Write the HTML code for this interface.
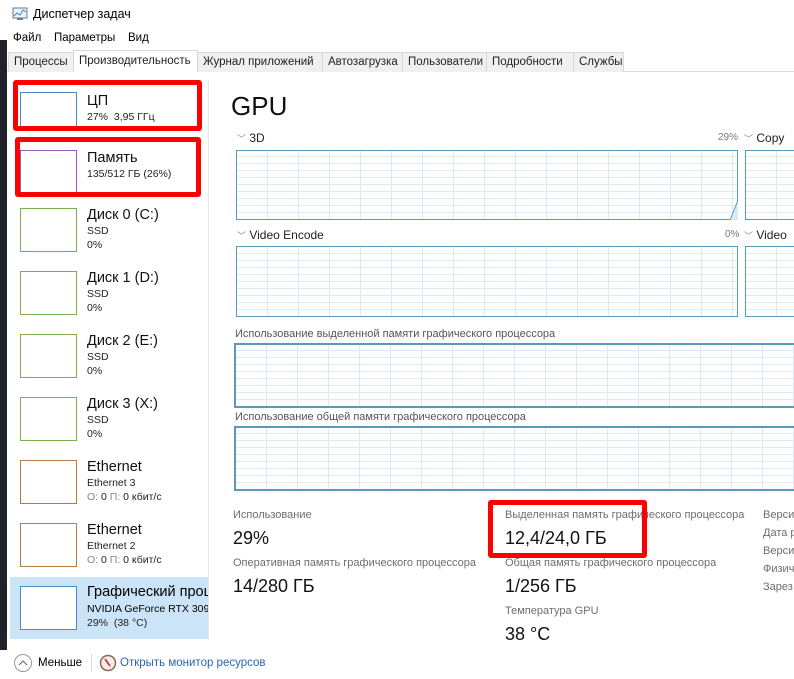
<!DOCTYPE html>
<html><head><meta charset="utf-8"><style>
*{margin:0;padding:0;box-sizing:border-box}
body{width:794px;height:679px;overflow:hidden;background:#fff;font-family:"Liberation Sans","Noto Sans CJK SC",sans-serif;color:#000;position:relative}
.a{position:absolute;white-space:nowrap}
.strip{position:absolute;left:0;top:40px;width:7px;height:610px;background:#1f2329}
.tab{position:absolute;top:52px;height:20px;background:#f0f0f0;border:1px solid #d9d9d9;border-bottom:none;font-size:11.5px;line-height:18px;padding-left:5px;color:#222;white-space:nowrap;overflow:hidden}
.thumb{position:absolute;left:20px;width:57px;height:44px;border:1px solid #4f88c0;background:#fff}
.t1{position:absolute;left:87px;font-size:14.5px;color:#111;white-space:nowrap}
.t2{position:absolute;left:87px;font-size:10.5px;color:#222;white-space:nowrap}
.red{position:absolute;border:5px solid #f00;border-radius:3px}
.g{position:absolute;border:1px solid #5a9ab8;background-color:#fff;
background-image:repeating-linear-gradient(90deg,transparent 0 30px,#dceaf4 30px 31px),repeating-linear-gradient(0deg,transparent 0 6px,#dceaf4 6px 7px)}
.lbl{position:absolute;font-size:12px;color:#222;white-space:nowrap}
.sl{position:absolute;font-size:11px;color:#6d6d6d;white-space:nowrap}
.sv{position:absolute;font-size:18px;color:#111;white-space:nowrap}
</style></head><body>
<div class="strip"></div>
<svg class="a" style="left:12px;top:7px" width="16" height="14"><rect x="1" y="1" width="14" height="10" fill="#eaf2fa" stroke="#6a7d90"/><polyline points="2,9 5,6 8,8 11,3 14,5" fill="none" stroke="#3a8ad0"/><rect x="5" y="11" width="6" height="2" fill="#6a7d90"/></svg>
<div class="a" style="left:33px;top:7px;font-size:12.5px">Диспетчер задач</div>
<div class="a" style="left:13px;top:32px;font-size:11.5px">Файл</div>
<div class="a" style="left:54px;top:32px;font-size:11.5px">Параметры</div>
<div class="a" style="left:128px;top:32px;font-size:11.5px">Вид</div>
<div class="a" style="left:7px;top:71px;width:787px;height:1px;background:#d9d9d9"></div>
<div class="tab" style="left:8px;width:66px">Процессы</div>
<div class="tab" style="left:73px;top:50px;height:22px;width:125px;background:#fff;line-height:20px">Производительность</div>
<div class="tab" style="left:197px;width:126px">Журнал приложений</div>
<div class="tab" style="left:322px;width:81px">Автозагрузка</div>
<div class="tab" style="left:402px;width:85px">Пользователи</div>
<div class="tab" style="left:486px;width:88px">Подробности</div>
<div class="tab" style="left:573px;width:51px">Службы</div>
<div class="a" style="left:208px;top:80px;width:1px;height:560px;background:#e6e6e6"></div>

<div class="thumb" style="top:92px;height:35px"></div><div class="t1" style="top:93px">ЦП</div><div class="t2" style="top:111px">27%&nbsp; 3,95 ГГц</div>
<div class="thumb" style="top:150px;border-color:#9a58b8"></div><div class="t1" style="top:150px">Память</div><div class="t2" style="top:168px">135/512 ГБ (26%)</div>
<div class="thumb" style="top:208px;border-color:#7ab050"></div><div class="t1" style="top:207px">Диск 0 (C:)</div><div class="t2" style="top:225px">SSD</div><div class="t2" style="top:239px">0%</div>
<div class="thumb" style="top:271px;border-color:#7ab050"></div><div class="t1" style="top:270px">Диск 1 (D:)</div><div class="t2" style="top:288px">SSD</div><div class="t2" style="top:302px">0%</div>
<div class="thumb" style="top:334px;border-color:#7ab050"></div><div class="t1" style="top:333px">Диск 2 (E:)</div><div class="t2" style="top:351px">SSD</div><div class="t2" style="top:365px">0%</div>
<div class="thumb" style="top:397px;border-color:#7ab050"></div><div class="t1" style="top:396px">Диск 3 (X:)</div><div class="t2" style="top:414px">SSD</div><div class="t2" style="top:428px">0%</div>
<div class="thumb" style="top:460px;border-color:#b87a40"></div><div class="t1" style="top:459px">Ethernet</div><div class="t2" style="top:477px">Ethernet 3</div><div class="t2" style="top:491px"><span style="color:#888">О:</span> 0 <span style="color:#888">П:</span> 0 кбит/с</div>
<div class="thumb" style="top:523px;border-color:#b87a40"></div><div class="t1" style="top:522px">Ethernet</div><div class="t2" style="top:540px">Ethernet 2</div><div class="t2" style="top:554px"><span style="color:#888">О:</span> 0 <span style="color:#888">П:</span> 0 кбит/с</div>
<div class="a" style="left:10px;top:577px;width:198px;height:62px;background:#cce4f7"></div>
<div class="thumb" style="top:586px"></div>
<div class="a" style="left:87px;top:584px;width:121px;overflow:hidden;font-size:14.5px">Графический процессор</div>
<div class="a" style="left:87px;top:603px;width:121px;overflow:hidden;font-size:10.5px">NVIDIA GeForce RTX 3090</div>
<div class="t2" style="top:617px">29%&nbsp; (38 °C)</div>

<div class="red" style="left:13px;top:80px;width:189px;height:51px"></div>
<div class="red" style="left:15px;top:137px;width:186px;height:60px"></div>

<div class="a" style="left:231px;top:91px;font-size:26px;color:#111">GPU</div>
<div class="lbl" style="left:237px;top:131px"><span style="color:#888;font-size:9px">﹀</span> 3D</div>
<div class="a" style="left:718px;top:132px;font-size:10px;color:#777">29%</div>
<div class="lbl" style="left:744px;top:131px"><span style="color:#888;font-size:9px">﹀</span> Copy</div>
<div class="g" style="left:236px;top:150px;width:502px;height:70px"></div>
<svg class="a" style="left:728px;top:198px" width="10" height="22"><polygon points="2,22 10,2 10,22" fill="#d8eaf6"/><line x1="2" y1="22" x2="10" y2="2" stroke="#5a9ac8"/></svg>
<div class="g" style="left:745px;top:150px;width:60px;height:70px"></div>
<div class="lbl" style="left:237px;top:228px"><span style="color:#888;font-size:9px">﹀</span> Video Encode</div>
<div class="a" style="left:725px;top:229px;font-size:10px;color:#777">0%</div>
<div class="lbl" style="left:744px;top:228px"><span style="color:#888;font-size:9px">﹀</span> Video</div>
<div class="g" style="left:236px;top:246px;width:502px;height:71px"></div>
<div class="g" style="left:745px;top:246px;width:60px;height:71px"></div>
<div class="sl" style="left:235px;top:328px;color:#555">Использование выделенной памяти графического процессора</div>
<div class="g" style="left:234px;top:343px;width:570px;height:65px;border-width:2px"></div>
<div class="sl" style="left:235px;top:411px;color:#555">Использование общей памяти графического процессора</div>
<div class="g" style="left:234px;top:426px;width:570px;height:65px;border-width:2px"></div>

<div class="sl" style="left:233px;top:509px">Использование</div>
<div class="sv" style="left:233px;top:528px">29%</div>
<div class="sl" style="left:233px;top:557px">Оперативная память графического процессора</div>
<div class="sv" style="left:233px;top:576px">14/280 ГБ</div>
<div class="sl" style="left:505px;top:509px">Выделенная память графического процессора</div>
<div class="sv" style="left:505px;top:528px">12,4/24,0 ГБ</div>
<div class="sl" style="left:505px;top:557px">Общая память графического процессора</div>
<div class="sv" style="left:505px;top:576px">1/256 ГБ</div>
<div class="sl" style="left:505px;top:605px">Температура GPU</div>
<div class="sv" style="left:505px;top:624px">38 °C</div>
<div class="sl" style="left:763px;top:509px">Версия</div>
<div class="sl" style="left:763px;top:527px">Дата р</div>
<div class="sl" style="left:763px;top:545px">Версия</div>
<div class="sl" style="left:763px;top:563px">Физич</div>
<div class="sl" style="left:763px;top:581px">Зарез</div>
<div class="red" style="left:488px;top:500px;width:159px;height:58px"></div>

<svg class="a" style="left:13px;top:653px" width="20" height="20"><circle cx="10" cy="10" r="8.5" fill="none" stroke="#999"/><polyline points="6,12 10,8 14,12" fill="none" stroke="#666"/></svg>
<div class="a" style="left:38px;top:657px;font-size:11.5px">Меньше</div>
<div class="a" style="left:91px;top:654px;width:1px;height:18px;background:#ddd"></div>
<svg class="a" style="left:99px;top:654px" width="18" height="18"><circle cx="9" cy="9" r="7.5" fill="#f4ece6" stroke="#8a6a5a" stroke-width="1.5"/><line x1="6" y1="5" x2="11" y2="12" stroke="#c03030" stroke-width="1.6"/></svg>
<div class="a" style="left:120px;top:657px;font-size:11.5px;color:#2a64b0">Открыть монитор ресурсов</div>
</body></html>
